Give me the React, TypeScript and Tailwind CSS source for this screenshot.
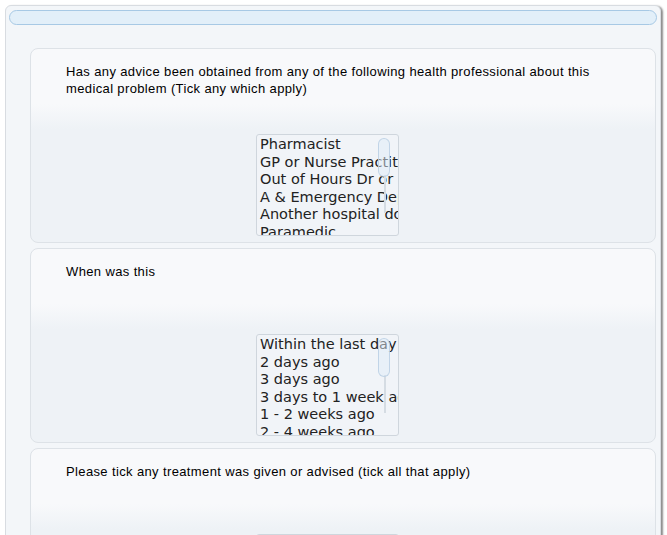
import React from "react";

type Question = {
  title: string;
  options: string[];
};

const questions: Question[] = [
  {
    title:
      "Has any advice been obtained from any of the following health professional about this medical problem (Tick any which apply)",
    options: [
      "Pharmacist",
      "GP or Nurse Practitioner",
      "Out of Hours Dr or Nurse",
      "A & Emergency Department",
      "Another hospital doctor",
      "Paramedic",
    ],
  },
  {
    title: "When was this",
    options: [
      "Within the last day",
      "2 days ago",
      "3 days ago",
      "3 days to 1 week ago",
      "1 - 2 weeks ago",
      "2 - 4 weeks ago",
    ],
  },
  {
    title: "Please tick any treatment was given or advised (tick all that apply)",
    options: ["Nothing", "Advice only", "Tablets or medicine"],
  },
];

function ListBox({ options }: { options: string[] }) {
  return (
    <div className="relative ml-[190px] h-[102px] w-[143px] overflow-hidden rounded-[3px] border border-[#cfd6dd] bg-[#f1f4f8]">
      <div className="whitespace-nowrap pl-[3px] pt-[1px] font-['DejaVu_Sans',sans-serif] text-[14.5px] leading-[17.6px] text-[#222]">
        {options.map((o) => (
          <div key={o}>{o}</div>
        ))}
      </div>
      {/* scroll thumb + track */}
      <div className="absolute left-[127px] top-[40px] h-[38px] w-[2px] bg-[#d5dce3]" />
      <div className="absolute left-[121px] top-[3px] h-[39px] w-[12px] rounded-full border border-[#b8cee2]/80 bg-[#dfebf7]/50" />
    </div>
  );
}

function Card({ q }: { q: Question }) {
  return (
    <div className="mr-[4px] ml-[24px] rounded-lg border border-[#dde2e7] bg-[linear-gradient(to_bottom,#f8f9fb_0px,#f8f9fb_55px,#eef2f6_80px,#eef2f6_100%)] pt-[14px] pb-[6px] pl-[35px]">
      <div className="h-[71px] pr-[50px] font-['Liberation_Sans',Arial,sans-serif] text-[13px] leading-[17px] tracking-[0.37px] text-black">
        {q.title}
      </div>
      <ListBox options={q.options} />
    </div>
  );
}

export default function App() {
  return (
    <div className="h-[535px] overflow-hidden bg-white pt-[5px] pl-[5px]">
      <div className="h-[560px] w-[656px] rounded-md border border-[#d8dce1] bg-[#f3f6f9] shadow-[2px_1px_2px_rgba(0,0,0,0.45)]">
        <div className="mx-[3px] mt-[4px] h-[15px] rounded-full border border-[#a7c9e5] bg-[#e2eff9]" />
        <div className="mt-[23px] flex flex-col gap-[5px]">
          {questions.map((q) => (
            <Card key={q.title} q={q} />
          ))}
        </div>
      </div>
    </div>
  );
}
